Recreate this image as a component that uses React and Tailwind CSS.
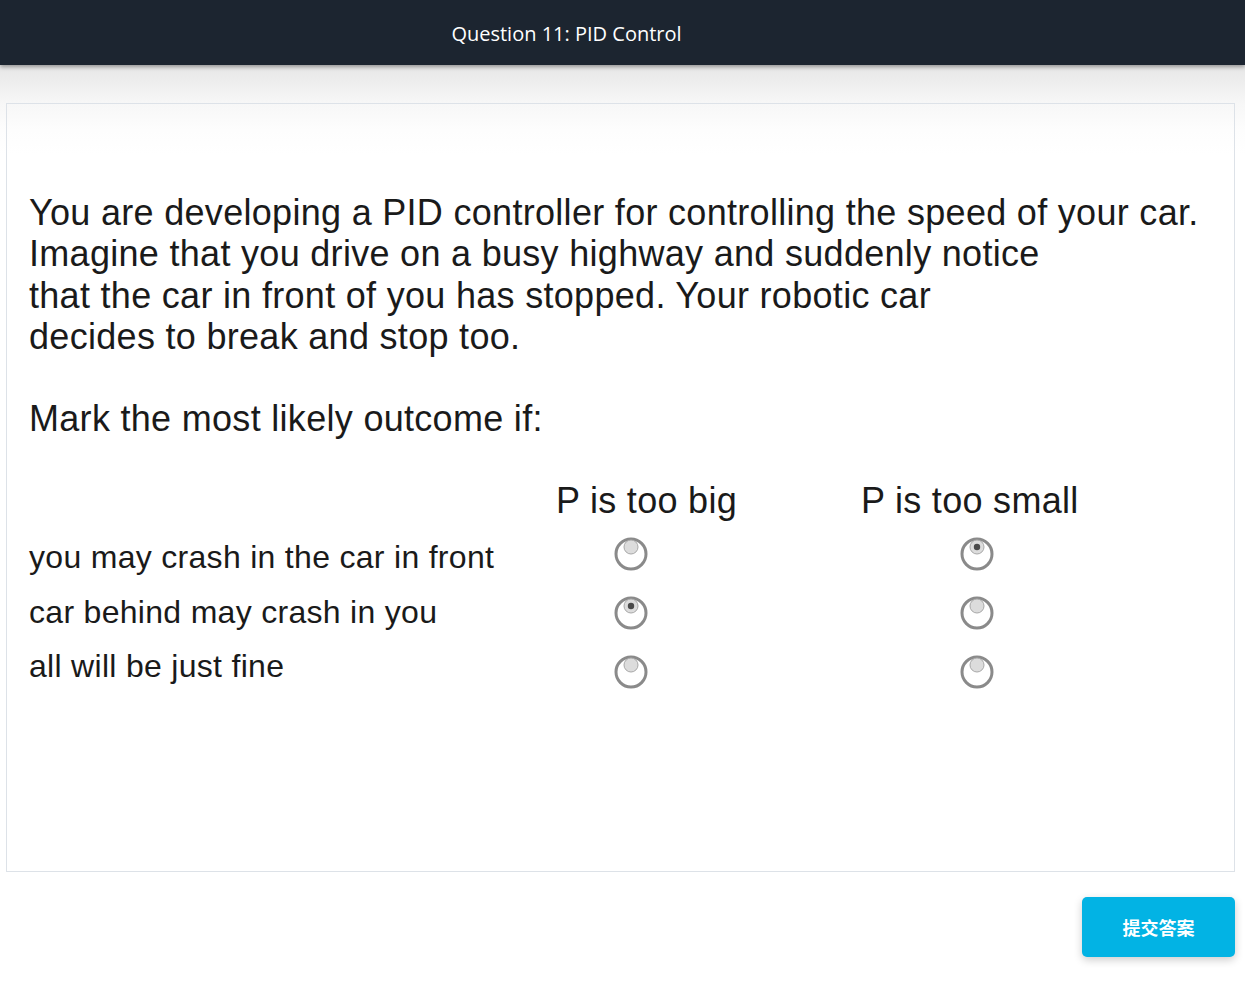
function Radio({ checked }) {
  return (
    <svg width="36" height="36" viewBox="0 0 36 36" className="block">
      <circle cx="18" cy="19" r="15" fill="none" stroke="#8a8a8a" strokeWidth="3" />
      <circle cx="18" cy="12" r="7" fill="#dcdcdc" stroke="#a8a8a8" strokeWidth="1" />
      {checked && <circle cx="18" cy="12" r="3.2" fill="#4a4a4a" />}
    </svg>
  );
}

const rows = [
  { label: "you may crash in the car in front", big: false, small: true },
  { label: "car behind may crash in you", big: true, small: false },
  { label: "all will be just fine", big: false, small: false },
];

export default function App() {
  return (
    <div className="min-h-[1003px] bg-white">
      <header className="relative z-10 h-[65px] bg-[#1c2530] flex items-center shadow-[0_2px_4px_rgba(0,0,0,0.35)]">
        <h1 className="w-full pr-[112px] pt-[2px] text-center text-white text-[20px] font-['Open_Sans',sans-serif]">
          Question 11: PID Control
        </h1>
      </header>

      <div className="bg-[linear-gradient(to_bottom,#e6e6e6_0px,#f7f7f7_38px,#fdfdfd_65px,#ffffff_90px)] pt-[38px] pl-[6px] pr-[10px]">
        <div className="h-[769px] border border-[#dde2e8] pl-[22px] pt-[88px] text-[#1a1a1a] font-['Liberation_Sans',Arial,sans-serif] tracking-[0.3px]">
          <p className="text-[36px] leading-[41.3px]">
            You are developing a PID controller for controlling the speed of your car.
            <br />
            Imagine that you drive on a busy highway and suddenly notice
            <br />
            that the car in front of you has stopped. Your robotic car
            <br />
            decides to break and stop too.
          </p>
          <p className="mt-[41px] text-[36px] leading-[41.3px]">Mark the most likely outcome if:</p>

          <div className="mt-[40px] flex text-[36px] leading-[44px]">
            <span className="w-[527px]" />
            <span className="w-[305px]">P is too big</span>
            <span>P is too small</span>
          </div>

          <div className="flex">
            <div className="w-[584px] pt-[7px] flex flex-col text-[32px] leading-[54.5px]">
              {rows.map((r) => (
                <span key={r.label}>{r.label}</span>
              ))}
            </div>
            <div className="pt-[12px] flex flex-col gap-[23px]">
              {rows.map((r) => (
                <Radio key={r.label} checked={r.big} />
              ))}
            </div>
            <span className="w-[310px]" />
            <div className="pt-[12px] flex flex-col gap-[23px]">
              {rows.map((r) => (
                <Radio key={r.label} checked={r.small} />
              ))}
            </div>
          </div>
        </div>
      </div>

      <div className="flex justify-end pr-[10px] pt-[25px]">
        <button className="w-[153px] h-[60px] rounded-[5px] bg-[#02b3e4] text-white text-[18px] font-bold shadow-[0_3px_8px_rgba(0,0,0,0.2)] font-['Noto_Sans_CJK_SC',sans-serif]">
          提交答案
        </button>
      </div>
    </div>
  );
}
